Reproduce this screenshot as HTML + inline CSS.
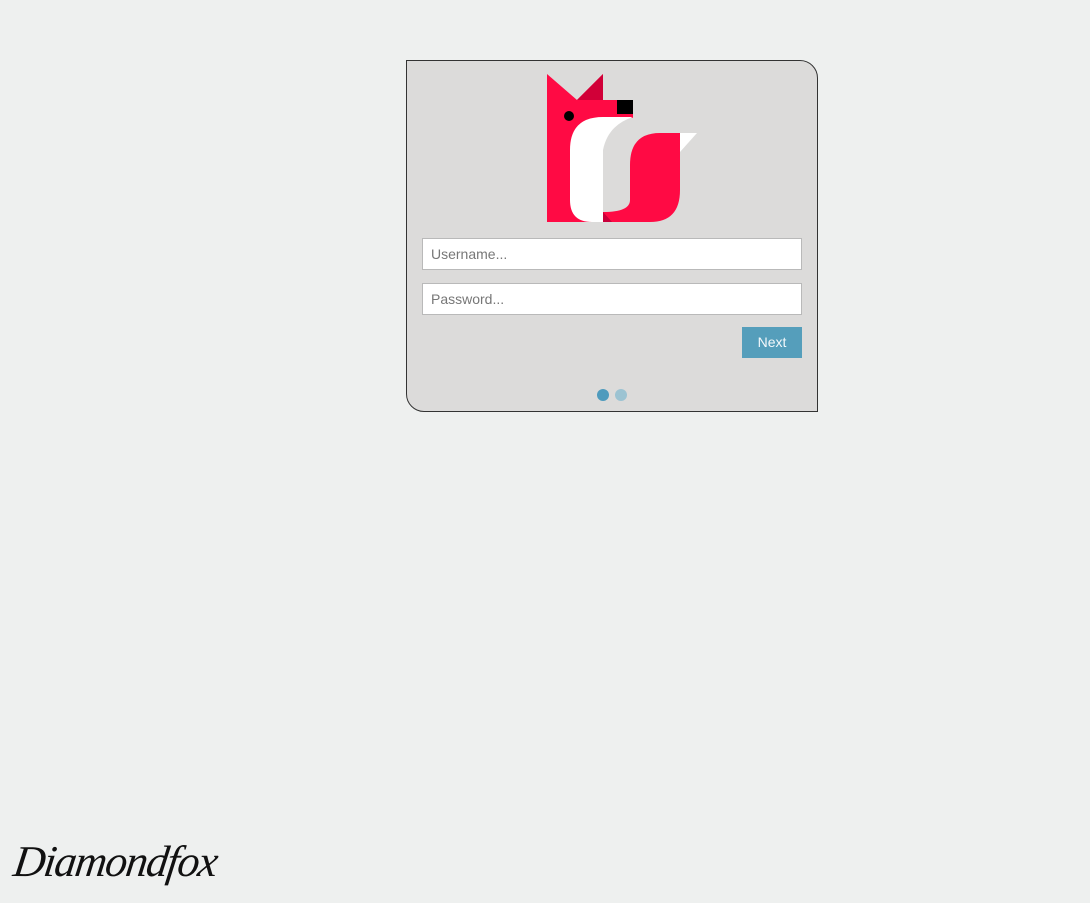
<!DOCTYPE html>
<html><head><meta charset="utf-8"><style>
html,body{margin:0;padding:0;width:1090px;height:903px;overflow:hidden;background:#eef0ef;font-family:"Liberation Sans",sans-serif;}
.card{position:absolute;left:406px;top:60px;width:410px;height:350px;background:#dcdbda;border:1px solid #333;border-radius:0 18px 0 18px;z-index:1;}
.inp{position:absolute;left:15px;width:370px;height:30px;background:#fff;border:1px solid #b9b9b9;font-size:14px;color:#777;line-height:30px;padding-left:8px;}
.btn{position:absolute;left:335px;top:266px;width:60px;height:31px;background:#559ebb;color:#f3f8fb;font-size:14px;text-align:center;line-height:31px;}
.dot{position:absolute;top:328px;width:12px;height:12px;border-radius:50%;}
.sig{position:absolute;left:14px;top:836px;font-family:"Liberation Serif",serif;font-style:italic;font-size:44px;color:#111;transform:skewX(-8deg);letter-spacing:-1.5px;}
svg{z-index:2}
</style></head><body>
<div class="card">
<div class="inp" style="top:177px">Username...</div>
<div class="inp" style="top:222px">Password...</div>
<div class="btn">Next</div>
<div class="dot" style="left:190px;background:#4f9bbd"></div>
<div class="dot" style="left:208px;background:#9cc3d2"></div>
</div>
<svg style="position:absolute;left:0;top:0" width="1090" height="230">
<polygon points="547,74 577,100 603,74 603,222 547,222" fill="#ff0a44"/>
<polygon points="577,100 603,74 603,100" fill="#d10038"/>
<rect x="560" y="100" width="73" height="18" fill="#ff0a44"/>
<rect x="617" y="100" width="16" height="14" fill="#000"/>
<circle cx="569" cy="116" r="5" fill="#000"/>
<path d="M603,117 L633,117 Q608,125 603,150 L603,222 L592,222 Q570,222 570,200 L570,150 Q570,117 603,117 Z" fill="#fff"/>
<path d="M603,222 L650,222 Q680,222 680,190 L680,133 L660,133 Q630,133 630,165 L630,200 Q630,212 603,212 Z" fill="#ff0a44"/>
<polygon points="603,212 603,222 612,222" fill="#c9003a"/>
<polygon points="680,133 697,133 680,152" fill="#fff"/>
</svg>
<div class="sig">Diamondfox</div>
</body></html>
